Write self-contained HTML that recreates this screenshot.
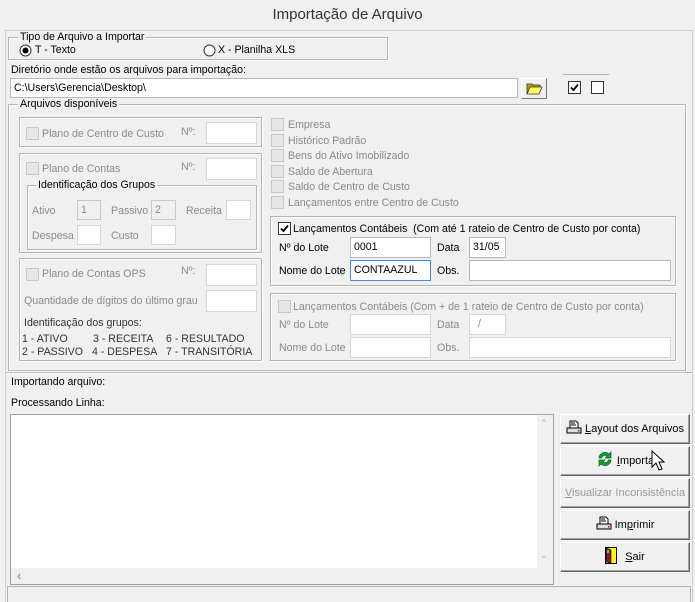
<!DOCTYPE html>
<html><head><meta charset="utf-8"><style>
*{box-sizing:border-box;margin:0;padding:0}
body{width:695px;height:602px;background:#f0f0f0;font-family:"Liberation Sans",sans-serif;font-size:10.6px;color:#000;position:relative;overflow:hidden}
.a{position:absolute;white-space:nowrap}
.t{position:absolute;white-space:nowrap;line-height:13px}
.g{color:#8a8a8a}
.box{position:absolute;border:1px solid #b4b4b4;box-shadow:inset 1px 1px 0 #fff,1px 1px 0 #fff}
.lg{position:absolute;background:#f0f0f0;padding:0 2px;line-height:12px;white-space:nowrap}
.in{position:absolute;background:#fff;border:1px solid #b8b8b8;line-height:18px;padding-left:3px;white-space:nowrap}
.in.d{border-color:#d6d6d6}
.in.dg{background:#f0f0f0;border-color:#c8c8c8;color:#8a8a8a}
.cb{position:absolute;width:13px;height:13px;border:1px solid #c8c8c8;background:#e6e6e6}
.cbk{position:absolute;width:13px;height:13px;border:1px solid #333;background:#fff}
.btn{position:absolute;left:560px;width:130px;height:30px;background:#f0f0f0;border:1px solid;border-color:#fff #666 #666 #fff;box-shadow:inset -1px -1px 0 #a0a0a0;text-align:center;line-height:28px;font-size:11px}
.btn u{text-decoration:underline}
</style></head><body>
<div class="a" style="left:0;width:695px;top:6px;text-align:center;font-size:15px;color:#333">Importação de Arquivo</div>
<div class="a" style="left:5px;top:30px;width:688px;height:572px;border:1px solid #d0d0d0;border-bottom:none"></div>

<div class="box" style="left:8px;top:37px;width:380px;height:23px"></div>
<div class="lg" style="left:18px;top:31px">Tipo de Arquivo a Importar</div>
<svg class="a" style="left:19px;top:44px" width="13" height="13"><circle cx="6.5" cy="6.5" r="5.5" fill="#fff" stroke="#333"/><circle cx="6.5" cy="6.5" r="3" fill="#000"/></svg>
<div class="t" style="left:35px;top:44px">T - Texto</div>
<svg class="a" style="left:203px;top:44px" width="13" height="13"><circle cx="6.5" cy="6.5" r="5.5" fill="#fff" stroke="#333"/></svg>
<div class="t" style="left:218px;top:44px">X - Planilha XLS</div>

<div class="t" style="left:11px;top:64px">Diretório onde estão os arquivos para importação:</div>
<div class="in" style="left:10px;top:78px;width:508px;height:20px">C:\Users\Gerencia\Desktop\</div>
<div class="a" style="left:521px;top:78px;width:26px;height:21px;border:1px solid;border-color:#fff #777 #777 #fff;background:#f0f0f0"></div>
<svg class="a" style="left:526px;top:82px" width="17" height="13"><path d="M1 2h5l1 1h7v2H4L1 12z" fill="#c8a000" stroke="#333" stroke-width="0.8"/><path d="M1 12L4 5h12l-3 7z" fill="#ffff60" stroke="#333" stroke-width="0.8"/></svg>
<div class="a" style="left:563px;top:74px;width:46px;border-top:1px solid #b4b4b4"></div>
<div class="cbk" style="left:568px;top:81px"></div>
<svg class="a" style="left:569px;top:82px" width="11" height="11"><path d="M2 5.5l2.5 2.5L9 2.5" fill="none" stroke="#000" stroke-width="1.8"/></svg>
<div class="cbk" style="left:591px;top:81px"></div>

<div class="box" style="left:8px;top:104px;width:678px;height:267px"></div>
<div class="lg" style="left:18px;top:98px">Arquivos disponíveis</div>

<div class="box" style="left:19px;top:117px;width:243px;height:30px"></div>
<div class="cb" style="left:26px;top:127px"></div>
<div class="t g" style="left:42px;top:128px">Plano de Centro de Custo</div>
<div class="t g" style="left:181px;top:126px">Nº:</div>
<div class="in d" style="left:206px;top:122px;width:51px;height:22px"></div>
<div class="box" style="left:19px;top:153px;width:243px;height:100px"></div>
<div class="cb" style="left:26px;top:162px"></div>
<div class="t g" style="left:42px;top:163px">Plano de Contas</div>
<div class="t g" style="left:181px;top:161px">Nº:</div>
<div class="in d" style="left:206px;top:158px;width:51px;height:22px"></div>
<div class="box" style="left:27px;top:185px;width:230px;height:65px"></div>
<div class="lg" style="left:36px;top:179px">Identificação dos Grupos</div>
<div class="t g" style="left:32px;top:205px">Ativo</div>
<div class="in dg" style="left:77px;top:200px;width:24px;height:20px">1</div>
<div class="t g" style="left:111px;top:205px">Passivo</div>
<div class="in dg" style="left:151px;top:200px;width:25px;height:20px">2</div>
<div class="t g" style="left:186px;top:205px">Receita</div>
<div class="in d" style="left:226px;top:200px;width:25px;height:20px"></div>
<div class="t g" style="left:32px;top:230px">Despesa</div>
<div class="in d" style="left:77px;top:225px;width:24px;height:20px"></div>
<div class="t g" style="left:111px;top:230px">Custo</div>
<div class="in d" style="left:151px;top:225px;width:25px;height:20px"></div>
<div class="box" style="left:19px;top:258px;width:243px;height:103px"></div>
<div class="cb" style="left:26px;top:268px"></div>
<div class="t g" style="left:42px;top:268px">Plano de Contas OPS</div>
<div class="t g" style="left:181px;top:265px">Nº:</div>
<div class="in d" style="left:206px;top:264px;width:51px;height:22px"></div>
<div class="t g" style="left:24px;top:295px">Quantidade de dígitos do último grau</div>
<div class="in d" style="left:206px;top:290px;width:51px;height:22px"></div>
<div class="t" style="left:24px;top:317px;color:#333">Identificação dos grupos:</div>
<div class="t" style="left:22px;top:333px;color:#333">1 - ATIVO</div>
<div class="t" style="left:93px;top:333px;color:#333">3 - RECEITA</div>
<div class="t" style="left:166px;top:333px;color:#333">6 - RESULTADO</div>
<div class="t" style="left:22px;top:346px;color:#333">2 - PASSIVO</div>
<div class="t" style="left:92px;top:346px;color:#333">4 - DESPESA</div>
<div class="t" style="left:166px;top:346px;color:#333">7 - TRANSITÓRIA</div>

<div class="cb" style="left:271px;top:118px"></div><div class="t g" style="left:288px;top:119px">Empresa</div>
<div class="cb" style="left:271px;top:134px"></div><div class="t g" style="left:288px;top:135px">Histórico Padrão</div>
<div class="cb" style="left:271px;top:149px"></div><div class="t g" style="left:288px;top:150px">Bens do Ativo Imobilizado</div>
<div class="cb" style="left:271px;top:165px"></div><div class="t g" style="left:288px;top:166px">Saldo de Abertura</div>
<div class="cb" style="left:271px;top:180px"></div><div class="t g" style="left:288px;top:181px">Saldo de Centro de Custo</div>
<div class="cb" style="left:271px;top:196px"></div><div class="t g" style="left:288px;top:197px">Lançamentos entre Centro de Custo</div>

<div class="box" style="left:270px;top:216px;width:406px;height:70px"></div>
<div class="cbk" style="left:278px;top:222px"></div>
<svg class="a" style="left:279px;top:223px" width="11" height="11"><path d="M2 5.5l2.5 2.5L9 2.5" fill="none" stroke="#000" stroke-width="1.8"/></svg>
<div class="t" style="left:293px;top:223px">Lançamentos Contábeis &nbsp;(Com até 1 rateio de Centro de Custo por conta)</div>
<div class="t" style="left:279px;top:242px">Nº do Lote</div>
<div class="in" style="left:350px;top:237px;width:81px;height:21px">0001</div>
<div class="t" style="left:437px;top:242px">Data</div>
<div class="in" style="left:469px;top:237px;width:37px;height:21px">31/05</div>
<div class="t" style="left:279px;top:265px">Nome do Lote</div>
<div class="in" style="left:350px;top:260px;width:81px;height:21px;border-color:#3c8ce6">CONTAAZUL</div>
<div class="t" style="left:437px;top:265px">Obs.</div>
<div class="in" style="left:469px;top:260px;width:202px;height:21px"></div>

<div class="box" style="left:270px;top:293px;width:406px;height:68px"></div>
<div class="cb" style="left:278px;top:300px"></div>
<div class="t g" style="left:293px;top:301px">Lançamentos Contábeis (Com + de 1 rateio de Centro de Custo por conta)</div>
<div class="t g" style="left:279px;top:319px">Nº do Lote</div>
<div class="in d" style="left:350px;top:314px;width:81px;height:21px"></div>
<div class="t g" style="left:437px;top:319px">Data</div>
<div class="in d g" style="left:469px;top:314px;width:37px;height:21px;padding-left:8px">/</div>
<div class="t g" style="left:279px;top:342px">Nome do Lote</div>
<div class="in d" style="left:350px;top:337px;width:81px;height:21px"></div>
<div class="t g" style="left:437px;top:342px">Obs.</div>
<div class="in d" style="left:469px;top:337px;width:202px;height:21px"></div>

<div class="a" style="left:6px;top:372px;width:686px;border-top:1px solid #b4b4b4;border-bottom:1px solid #fff"></div>
<div class="t" style="left:11px;top:376px">Importando arquivo:</div>
<div class="t" style="left:11px;top:397px">Processando Linha:</div>

<div class="a" style="left:10px;top:414px;width:544px;height:171px;border:1px solid #a0a0a0;background:#fff"></div>
<div class="a" style="left:537px;top:415px;width:16px;height:153px;background:#f0f0f0"></div>
<div class="a" style="left:540px;top:418px;color:#b0b0b0;font-size:9px">&#8963;</div>
<div class="a" style="left:540px;top:550px;color:#b0b0b0;font-size:9px">&#8964;</div>
<div class="a" style="left:11px;top:568px;width:542px;height:16px;background:#f0f0f0"></div>
<div class="a" style="left:17px;top:568px;color:#a0a0a0;font-size:13px;font-weight:bold">‹</div>
<div class="a" style="left:7px;top:586px;width:684px;height:16px;border:1px solid #b4b4b4;border-bottom:none;background:#f0f0f0"></div>

<div class="btn" style="top:414px"><svg width="16" height="14" style="vertical-align:-2px;margin-right:3px"><path d="M4 1h6l2 2v5H4z" fill="#fff" stroke="#000"/><path d="M5 3h4M5 5h5" stroke="#000"/><rect x="1" y="8" width="14" height="5" fill="#ddd" stroke="#000"/><rect x="12" y="10" width="1.5" height="1.5" fill="red"/></svg><u>L</u>ayout dos Arquivos</div>
<div class="btn" style="top:446px"><svg width="18" height="16" style="vertical-align:-3px;margin-right:3px"><path d="M3 7a6 6 0 0 1 10-4l2-2v6h-6l2-2a3.5 3.5 0 0 0-5.5 2z" fill="#1ca01c" stroke="#064" stroke-width=".7"/><path d="M15 9a6 6 0 0 1-10 4l-2 2V9h6l-2 2a3.5 3.5 0 0 0 5.5-2z" fill="#1ca01c" stroke="#064" stroke-width=".7"/></svg><u>I</u>mporta</div>
<svg class="a" style="left:651px;top:450px" width="14" height="22"><path d="M1 1v16l4-4 3 7 3-1-3-7h5z" fill="#fff" stroke="#000"/></svg>
<div class="btn" style="top:478px;color:#9a9a9a"><u>V</u>isualizar Inconsistência</div>
<div class="btn" style="top:510px"><svg width="16" height="14" style="vertical-align:-2px;margin-right:3px"><path d="M4 1h6l2 2v5H4z" fill="#fff" stroke="#000"/><path d="M5 3h4M5 5h5" stroke="#000"/><rect x="1" y="8" width="14" height="5" fill="#ddd" stroke="#000"/><rect x="12" y="10" width="1.5" height="1.5" fill="red"/></svg>Im<u>p</u>rimir</div>
<div class="btn" style="top:542px"><svg width="12" height="17" style="vertical-align:-4px;margin-right:8px"><rect x="0.5" y="0.5" width="11" height="16" fill="#ff0" stroke="#000"/><path d="M1 1l5 2v13l-5-1z" fill="#8b1a1a" stroke="#000" stroke-width=".6"/><rect x="2" y="3" width="2" height="3" fill="#2cf"/></svg><u>S</u>air</div>
</body></html>
